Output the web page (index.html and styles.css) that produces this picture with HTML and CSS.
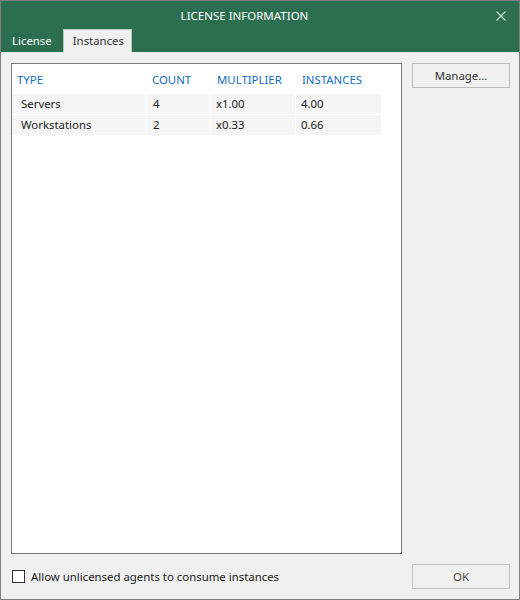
FILE: index.html
```html
<!DOCTYPE html>
<html>
<head>
<meta charset="utf-8">
<link rel="stylesheet" href="styles.css">
</head>
<body>
<div class="window">
  <div class="titlebar">
    <div class="title-row">
      <div class="title">LICENSE INFORMATION</div>
      <div class="close">
        <svg width="10" height="10" viewBox="0 0 10 10"><path d="M0.5 0.5 L9.5 9.5 M9.5 0.5 L0.5 9.5" stroke="#dfe9e3" stroke-width="1.2" fill="none"/></svg>
      </div>
    </div>
    <div class="tabs">
      <div class="tab">License</div>
      <div class="tab active">Instances</div>
    </div>
  </div>
  <div class="content">
    <div class="listbox">
      <div class="row head">
        <div class="c c1">TYPE</div>
        <div class="c c2">COUNT</div>
        <div class="c c3">MULTIPLIER</div>
        <div class="c c4">INSTANCES</div>
      </div>
      <div class="row item">
        <div class="c c1">Servers</div>
        <div class="c c2">4</div>
        <div class="c c3">x1.00</div>
        <div class="c c4">4.00</div>
      </div>
      <div class="row item">
        <div class="c c1">Workstations</div>
        <div class="c c2">2</div>
        <div class="c c3">x0.33</div>
        <div class="c c4">0.66</div>
      </div>
    </div>
    <div class="side">
      <div class="btn">Manage...</div>
    </div>
    <label class="check">
      <span class="box"></span>
      <span>Allow unlicensed agents to consume instances</span>
    </label>
    <div class="btn ok">OK</div>
  </div>
</div>
</body>
</html>
```
FILE: styles.css
```css
* { box-sizing: border-box; }
body {
  margin: 0;
  font-family: "Noto Sans", "Open Sans", sans-serif;
  font-size: 11.4px;
  color: #1a1a1a;
}
.window {
  width: 520px;
  height: 600px;
  border: 1px solid #7f7f7f;
  background: #f0f0f0;
  display: flex;
  flex-direction: column;
}
.titlebar {
  height: 51px;
  background: #2c6e50;
  display: flex;
  flex-direction: column;
}
.title-row {
  height: 28px;
  display: flex;
  align-items: center;
}
.title {
  flex: 1;
  text-align: center;
  color: #ffffff;
  font-size: 11.5px;
  padding-left: 2px;
  padding-top: 1px;
}
.close {
  width: 30px;
  height: 28px;
  display: flex;
  align-items: center;
  justify-content: center;
  padding-top: 2px;
  margin-right: 3px;
}
.close svg { display: block; }
.tabs {
  height: 23px;
  display: flex;
  align-items: flex-end;
  padding-left: 2px;
}
.tab {
  height: 23px;
  padding: 0 11px 1px 9px;
  color: #ffffff;
  display: flex;
  align-items: center;
}
.tab.active {
  background: #f0f0f0;
  color: #333333;
  border: 1px solid #b9c7bf;
  border-bottom: none;
  padding: 0 7px 1px 9px;
}
.content {
  flex: 1;
  display: grid;
  grid-template-columns: 391px 98px;
  grid-template-rows: 491px 25px;
  column-gap: 10px;
  row-gap: 10px;
  padding: 11px 9px 10px 10px;
}
.listbox {
  background: #ffffff;
  border: 1px solid #7a7a7a;
  display: flex;
  flex-direction: column;
}
.row {
  display: flex;
  width: 369px;
}
.row.head {
  height: 30px;
  align-items: center;
  color: #0f6cbd;
  padding-top: 1px;
}
.row.item {
  height: 21px;
  border-bottom: 1px solid #ffffff;
}
.row.item .c {
  background: #f5f5f5;
  border-right: 1px solid #ffffff;
  display: flex;
  align-items: center;
  padding-bottom: 1px;
}
.c1 { width: 135px; padding-left: 5px; }
.c2 { width: 64px; padding-left: 5px; }
.c3 { width: 85px; padding-left: 6px; }
.c4 { width: 85px; padding-left: 6px; }
.row.item .c4 { border-right: none; padding-left: 5px; }
.row.item .c3 { padding-left: 5px; }
.row.item .c1 { padding-left: 9px; }
.row.item .c2 { padding-left: 6px; }
.side {
  display: flex;
  flex-direction: column;
}
.btn {
  height: 25px;
  border: 1px solid #bcbcbc;
  background: #f0f0f0;
  color: #333333;
  display: flex;
  align-items: center;
  justify-content: center;
  padding-bottom: 1px;
}
.btn.ok {
  color: #4a4a4a;
  border-color: #c4c4c4;
}
.check {
  display: flex;
  align-items: center;
  gap: 6px;
  padding-left: 1px;
  color: #1a1a1a;
}
.box {
  width: 13px;
  height: 13px;
  border: 1px solid #333333;
  background: #ffffff;
  flex: none;
}
```
